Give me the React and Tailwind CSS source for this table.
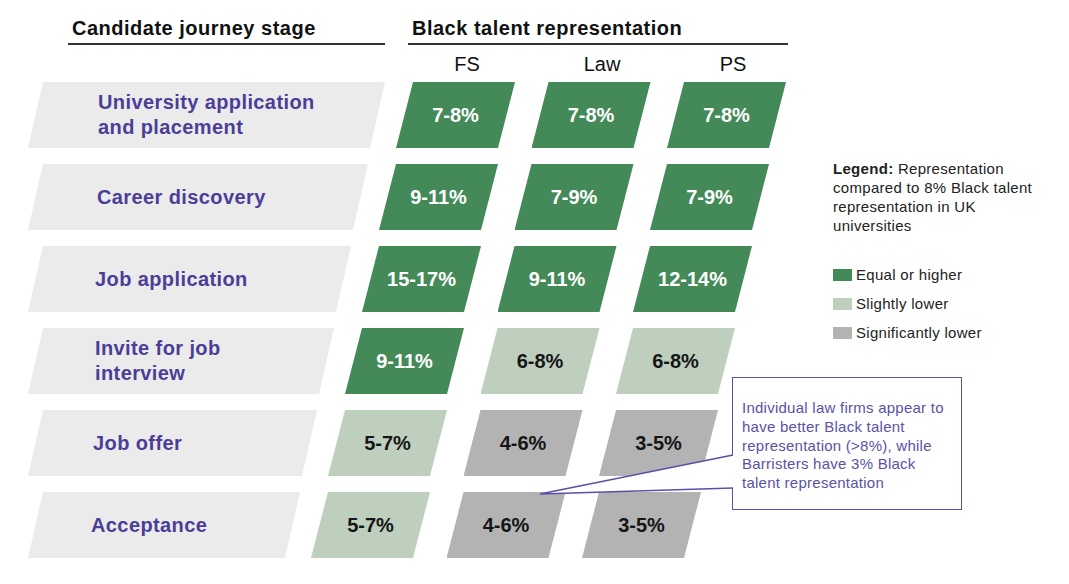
import React from 'react';

const labelClip = '[clip-path:polygon(15px_0,100%_0,calc(100%_-_15px)_100%,0_100%)]';
const cellClip = '[clip-path:polygon(17px_0,100%_0,calc(100%_-_17px)_100%,0_100%)]';

const tone = {
  G: 'bg-[#438a58] text-white',
  L: 'bg-[#bfcfbe] text-[#151515]',
  S: 'bg-[#b3b3b3] text-[#151515]',
};

const rows = [
  { label: ['University application', 'and placement'], w: 'w-[357px]', pl: 'pl-[70px]', cells: [['7-8%', 'G'], ['7-8%', 'G'], ['7-8%', 'G']] },
  { label: ['Career discovery'], w: 'w-[340px]', pl: 'pl-[69px]', cells: [['9-11%', 'G'], ['7-9%', 'G'], ['7-9%', 'G']] },
  { label: ['Job application'], w: 'w-[323px]', pl: 'pl-[67px]', cells: [['15-17%', 'G'], ['9-11%', 'G'], ['12-14%', 'G']] },
  { label: ['Invite for job', 'interview'], w: 'w-[306px]', pl: 'pl-[67px]', cells: [['9-11%', 'G'], ['6-8%', 'L'], ['6-8%', 'L']] },
  { label: ['Job offer'], w: 'w-[289px]', pl: 'pl-[65px]', cells: [['5-7%', 'L'], ['4-6%', 'S'], ['3-5%', 'S']] },
  { label: ['Acceptance'], w: 'w-[272px]', pl: 'pl-[63px]', cells: [['5-7%', 'L'], ['4-6%', 'S'], ['3-5%', 'S']] },
];

const legendItems = [
  ['Equal or higher', 'bg-[#438a58]'],
  ['Slightly lower', 'bg-[#bfcfbe]'],
  ['Significantly lower', 'bg-[#b3b3b3]'],
];

export default function App() {
  return (
    <div className="relative w-[1069px] h-[584px] bg-white overflow-hidden font-['Liberation_Sans',Arial,sans-serif]">
      <div className="flex">
        {/* Chart */}
        <div className="w-[833px] pl-[28px] shrink-0">
          {/* Headers */}
          <div className="flex pt-[16px]">
            <div className="ml-[40px] w-[317px] pl-[4px] pb-[3px] border-b-2 border-[#333] text-[20px] leading-[24px] font-bold tracking-[0.5px] text-[#111]">
              Candidate journey stage
            </div>
            <div className="ml-[23px] w-[380px] pl-[4px] pb-[3px] border-b-2 border-[#333] text-[20px] leading-[24px] font-bold tracking-[0.5px] text-[#111]">
              Black talent representation
            </div>
          </div>

          {/* Column labels */}
          <div className="flex mt-[7px] mb-[6px] text-[20px] leading-[24px] text-[#111]">
            <div className="ml-[385px] w-[108px] text-center">FS</div>
            <div className="ml-[27px] w-[108px] text-center">Law</div>
            <div className="ml-[23px] w-[108px] text-center">PS</div>
          </div>

          {/* Rows */}
          <div className="flex flex-col gap-[16px]">
            {rows.map((r, i) => (
              <div key={i} className="flex h-[66px]">
                <div className={`${r.w} ${r.pl} ${labelClip} h-full bg-[#ebebeb] flex flex-col justify-center text-[20px] leading-[25px] font-bold tracking-[0.4px] text-[#4b3e98]`}>
                  {r.label.map((l) => (
                    <span key={l}>{l}</span>
                  ))}
                </div>
                <div className="flex ml-[11px] gap-[16.5px]">
                  {r.cells.map(([v, t], j) => (
                    <div key={j} className={`${cellClip} ${tone[t]} w-[119px] h-full flex items-center justify-center text-[20px] font-bold`}>
                      {v}
                    </div>
                  ))}
                </div>
              </div>
            ))}
          </div>
        </div>

        {/* Legend */}
        <div className="w-[206px] pt-[159px] text-[15px] leading-[19px] tracking-[0.3px] text-[#222]">
          <p>
            <span className="font-bold">Legend:</span> Representation compared to 8% Black talent representation in UK universities
          </p>
          <div className="mt-[30px] flex flex-col gap-[10px]">
            {legendItems.map(([label, bg]) => (
              <div key={label} className="flex items-center gap-[4px]">
                <span className={`${bg} w-[19px] h-[12px] shrink-0`} />
                <span>{label}</span>
              </div>
            ))}
          </div>
        </div>
      </div>

      {/* Callout */}
      <div className="absolute left-[732px] top-[377px] w-[230px] h-[133px] border-[1.5px] border-[#5b50a8] bg-white pl-[9px] pr-[12px] pt-[21px] text-[15px] leading-[18.8px] tracking-[0.25px] text-[#5a52a5]">
        Individual law firms appear to have better Black talent representation (&gt;8%), while Barristers have 3% Black talent representation
      </div>
      <svg className="absolute left-0 top-0 pointer-events-none" width="1069" height="584">
        <polygon points="735,455 540,494 735,488" fill="#fff" />
        <polyline points="733,455 540,494 733,488" fill="none" stroke="#5b50a8" strokeWidth="1.5" />
      </svg>
    </div>
  );
}
